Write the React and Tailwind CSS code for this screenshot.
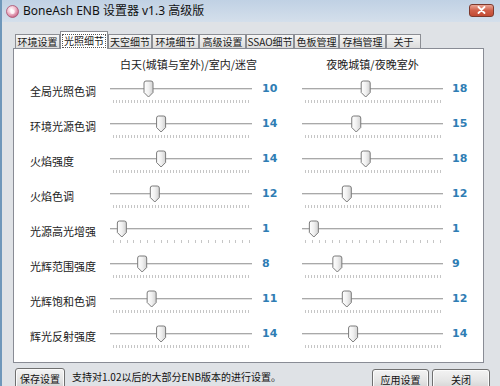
import React from "react";

const tabs = [
  { t: "环境设置", w: "w-[45px]" },
  { t: "光照细节", w: "w-[48px]", sel: true },
  { t: "天空细节", w: "w-[44px]" },
  { t: "环境细节", w: "w-[47px]" },
  { t: "高级设置", w: "w-[47px]" },
  { t: "SSAO细节", w: "w-[48px]" },
  { t: "色板管理", w: "w-[45px]" },
  { t: "存档管理", w: "w-[47px]" },
  { t: "关于", w: "w-[35px]" },
];

const rows = [
  { label: "全局光照色调", l: 10, r: 18 },
  { label: "环境光源色调", l: 14, r: 15 },
  { label: "火焰强度", l: 14, r: 18 },
  { label: "火焰色调", l: 12, r: 12 },
  { label: "光源高光增强", l: 1, r: 1, sparse: true },
  { label: "光辉范围强度", l: 8, r: 9 },
  { label: "光辉饱和色调", l: 11, r: 12 },
  { label: "辉光反射强度", l: 14, r: 14 },
];

function Slider({ w, value, sparse }) {
  const ticks = [];
  if (sparse) {
    for (let i = 0; i <= 20; i++) ticks.push(3 + i * ((w - 6) / 20));
  } else {
    for (let x = 3; x <= w - 2; x += 3) ticks.push(x);
  }
  const cx = sparse ? 5 + value * 6.85 : 7 + value * 3.15;
  return (
    <svg width={w} height={35} className="block shrink-0">
      <defs>
        <linearGradient id="thumbg" x1="0" y1="0" x2="1" y2="0">
          <stop offset="0" stopColor="#ffffff" />
          <stop offset="0.5" stopColor="#f1f1f1" />
          <stop offset="1" stopColor="#d2d2d2" />
        </linearGradient>
      </defs>
      <rect x="0" y="14" width={w} height="1" fill="#a9a9a9" />
      <rect x="0" y="15" width={w} height="1" fill="#e2e2e2" />
      {ticks.map((x, i) => (
        <rect key={i} x={Math.round(x)} y="26" width="1" height="3" fill="#c6c6c6" />
      ))}
      <path
        d={`M ${cx - 4.5} 9 Q ${cx - 4.5} 7 ${cx - 2.5} 7 H ${cx + 2.5} Q ${cx + 4.5} 7 ${cx + 4.5} 9 V 18.5 L ${cx} 23 L ${cx - 4.5} 18.5 Z`}
        fill="url(#thumbg)"
        stroke="#7a7a7a"
        strokeWidth="1"
      />
    </svg>
  );
}

function Button({ children, w }) {
  return (
    <div
      className={`${w} h-[22px] shrink-0 rounded-[3px] border border-[#707070] bg-gradient-to-b from-[#f3f3f3] via-[#e6e6e6] to-[#d0d0d0] flex items-center justify-center text-[10px] leading-[12px] text-[#111] shadow-[inset_0_0_0_1px_#fbfbfb]`}
    >
      {children}
    </div>
  );
}

export default function App() {
  return (
    <div className="relative w-[500px] h-[386px] overflow-hidden bg-[#dfe2e6] font-['Noto_Sans_CJK_SC',sans-serif] text-[#1a1a1a]">
      {/* left edge */}
      <div className="absolute left-0 top-0 w-[2px] h-full bg-[#6f97ba]" />
      {/* title bar */}
      <div className="h-[22px] flex items-center pl-[6px] pr-[6px] bg-gradient-to-b from-[#c0d1e4] to-[#d4dfeb]">
        <svg width="13" height="13" viewBox="0 0 13 13" className="shrink-0">
          <defs>
            <radialGradient id="ic" cx="0.4" cy="0.35" r="0.7">
              <stop offset="0" stopColor="#ffffff" />
              <stop offset="0.45" stopColor="#f3c4d4" />
              <stop offset="1" stopColor="#c45a7e" />
            </radialGradient>
          </defs>
          <circle cx="6.5" cy="6.5" r="6" fill="url(#ic)" stroke="#a8506e" strokeWidth="0.8" />
          <circle cx="6.5" cy="6.8" r="2.2" fill="#fff" opacity="0.8" />
        </svg>
        <span className="ml-[4px] text-[12px] leading-[14px] font-['Noto_Sans','Noto_Sans_CJK_SC',sans-serif] text-[#111]">
          BoneAsh ENB 设置器 v1.3 高级版
        </span>
        <div className="ml-auto mt-[-2px] mr-[0px] w-[25px] h-[13px] rounded-[3px] border border-[#7d3a2e] bg-gradient-to-b from-[#e8a596] via-[#d0604a] to-[#c24a33] flex items-center justify-center">
          <svg width="9" height="8" viewBox="0 0 9 8">
            <path d="M1.5 1 L7.5 7 M7.5 1 L1.5 7" stroke="#fff" strokeWidth="1.8" strokeLinecap="round" />
          </svg>
        </div>
      </div>

      {/* client area */}
      <div className="pt-[9px] pl-[13px]">
        {/* tabs */}
        <div className="flex items-end h-[17px] ml-[2px] text-[10px]">
          {tabs.map((tab) =>
            tab.sel ? (
              <div
                key={tab.t}
                className={`${tab.w} h-[18px] mb-[-1px] relative z-10 bg-white border border-b-0 border-[#8c8e94] flex items-center justify-center`}
              >
                <span className="border border-dotted border-[#555] px-[1px] leading-[12px]">{tab.t}</span>
              </div>
            ) : (
              <div
                key={tab.t}
                className={`${tab.w} h-[14px] bg-gradient-to-b from-[#f6f6f6] to-[#dcdcdc] border border-b-0 border-[#8c8e94] flex items-center justify-center leading-[12px]`}
              >
                {tab.t}
              </div>
            )
          )}
        </div>

        {/* panel */}
        <div className="w-[471px] h-[315px] bg-white border border-[#898c95] pt-[8px]">
          <div className="flex h-[14px] mb-[3px] text-[11px] leading-[14px] text-[#222]">
            <div className="w-[288px] pl-[106px]">白天(城镇与室外)/室内/迷宫</div>
            <div className="w-[141px] text-center">夜晚城镇/夜晚室外</div>
          </div>
          {rows.map((row) => (
            <div key={row.label} className="flex h-[35px]">
              <div className="w-[96px] shrink-0 pl-[16px] pt-[10px] text-[11px] leading-[14px] text-[#222]">
                {row.label}
              </div>
              <Slider w={142} value={row.l} sparse={row.sparse} />
              <div className="w-[50px] shrink-0 pl-[10px] pt-[9px] text-[11px] leading-[12px] font-bold text-[#2f7db4] font-['DejaVu_Sans',sans-serif]">
                {row.l}
              </div>
              <Slider w={141} value={row.r} sparse={row.sparse} />
              <div className="pl-[9px] pt-[9px] text-[11px] leading-[12px] font-bold text-[#2f7db4] font-['DejaVu_Sans',sans-serif]">
                {row.r}
              </div>
            </div>
          ))}
        </div>

        {/* bottom bar */}
        <div className="flex items-start h-[30px]">
          <div className="ml-[2px] mt-[5px]">
            <Button w="w-[50px]">保存设置</Button>
          </div>
          <div className="ml-[7px] mt-[7px] text-[10px] leading-[14px] text-[#111]">
            支持对1.02以后的大部分ENB版本的进行设置。
          </div>
          <div className="ml-auto mr-[10px] mt-[6px] flex gap-[3px]">
            <Button w="w-[57px]">应用设置</Button>
            <Button w="w-[58px]">关闭</Button>
          </div>
        </div>
      </div>
    </div>
  );
}
